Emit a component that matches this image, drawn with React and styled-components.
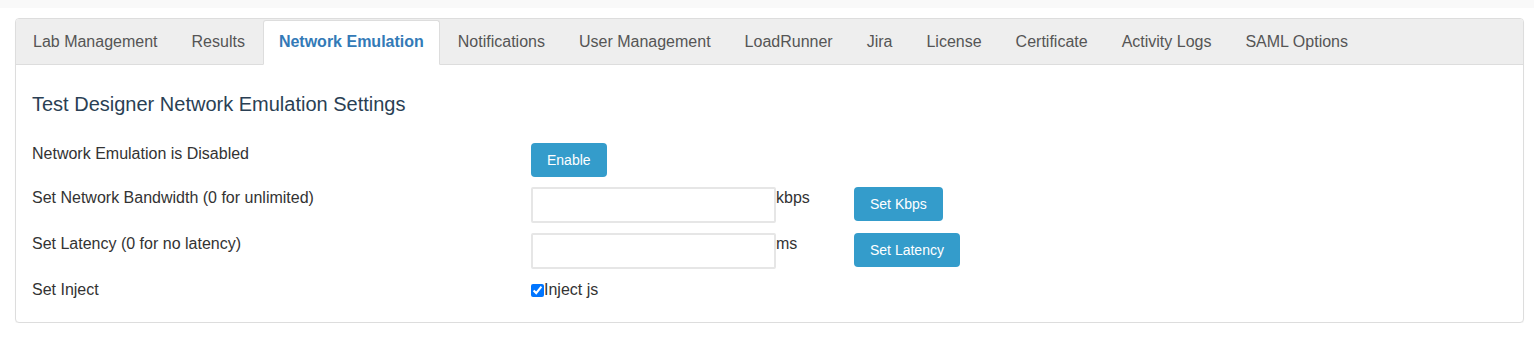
import React, { useState } from 'react'
import styled, { createGlobalStyle } from 'styled-components'

const GlobalStyle = createGlobalStyle`
  body {
    margin: 0;
    background: #fff;
    font-family: "Liberation Sans", Arial, sans-serif;
    color: #333;
  }
`

const tabs = [
  'Lab Management',
  'Results',
  'Network Emulation',
  'Notifications',
  'User Management',
  'LoadRunner',
  'Jira',
  'License',
  'Certificate',
  'Activity Logs',
  'SAML Options',
]

export default function App() {
  const [active, setActive] = useState('Network Emulation')
  const [inject, setInject] = useState(true)

  return (
    <>
      <GlobalStyle />
      <TopStrip />
      <Page>
        <Panel>
          <TabBar>
            {tabs.map((t) => (
              <Tab key={t} $active={t === active} onClick={() => setActive(t)}>
                {t}
              </Tab>
            ))}
          </TabBar>
          <Body>
            <Heading>Test Designer Network Emulation Settings</Heading>
            <Form>
              <Label>Network Emulation is Disabled</Label>
              <Actions>
                <Button>Enable</Button>
              </Actions>

              <Label>Set Network Bandwidth (0 for unlimited)</Label>
              <Input type="text" />
              <Unit>kbps</Unit>
              <Button>Set Kbps</Button>

              <Label>Set Latency (0 for no latency)</Label>
              <Input type="text" />
              <Unit>ms</Unit>
              <Button>Set Latency</Button>

              <Label>Set Inject</Label>
              <CheckLabel>
                <Check
                  type="checkbox"
                  checked={inject}
                  onChange={(e) => setInject(e.target.checked)}
                />
                Inject js
              </CheckLabel>
            </Form>
          </Body>
        </Panel>
      </Page>
    </>
  )
}

const TopStrip = styled.div`
  height: 8px;
  background: #f9f9f9;
`

const Page = styled.div`
  padding: 10px 10px 0 15px;
`

const Panel = styled.div`
  border: 1px solid #ddd;
  border-radius: 4px;
  background: #fff;
  box-shadow: 0 1px 1px rgba(0, 0, 0, 0.04);
`

const TabBar = styled.div`
  display: flex;
  padding: 1px 0 0 1px;
  background: #eee;
  border-bottom: 1px solid #ddd;
  border-radius: 3px 3px 0 0;
  height: 46px;
  box-sizing: border-box;
`

const Tab = styled.div`
  height: 45px;
  box-sizing: border-box;
  display: flex;
  align-items: center;
  padding: 0 15px 1px;
  margin-right: 2px;
  margin-bottom: -1px;
  border: 1px solid ${(p) => (p.$active ? '#ddd' : 'transparent')};
  border-bottom-color: ${(p) => (p.$active ? '#fff' : 'transparent')};
  border-radius: 3px 3px 0 0;
  background: ${(p) => (p.$active ? '#fff' : 'transparent')};
  color: ${(p) => (p.$active ? '#337ab7' : '#555')};
  font-size: 16px;
  font-weight: ${(p) => (p.$active ? 700 : 400)};
  white-space: nowrap;
  cursor: pointer;
`

const Body = styled.div`
  padding: 28px 16px 22px;
`

const Heading = styled.h2`
  margin: 0 0 28px;
  font-size: 20px;
  line-height: 22px;
  font-weight: 400;
  color: #2a3f54;
`

const Form = styled.div`
  display: grid;
  grid-template-columns: 499px 245px 78px auto;
  row-gap: 10px;
  align-items: start;
`

const Label = styled.div`
  grid-column: 1;
  padding-top: 1px;
  font-size: 16px;
  line-height: 20px;
  color: #333;
`

const Actions = styled.div`
  grid-column: 2 / -1;
`

const Unit = styled.div`
  padding-top: 1px;
  font-size: 16px;
  line-height: 20px;
  color: #333;
`

const Input = styled.input`
  width: 245px;
  height: 36px;
  box-sizing: border-box;
  margin: 0;
  border: 2px solid #e6e6e6;
  border-radius: 2px;
  background: #fff;
  font-family: inherit;
  font-size: 14px;
  padding: 6px 10px;
  outline: none;
`

const Button = styled.button`
  justify-self: start;
  height: 34px;
  padding: 0 16px;
  border: none;
  border-radius: 4px;
  background: #349ccb;
  color: #fff;
  font-family: "Liberation Sans", Arial, sans-serif;
  font-size: 14px;
  cursor: pointer;
`

const CheckLabel = styled.label`
  grid-column: 2 / -1;
  display: flex;
  align-items: center;
  font-size: 16px;
  line-height: 20px;
  color: #333;
  margin-top: 1px;
`

const Check = styled.input`
  width: 13px;
  height: 13px;
  margin: 0;
`
